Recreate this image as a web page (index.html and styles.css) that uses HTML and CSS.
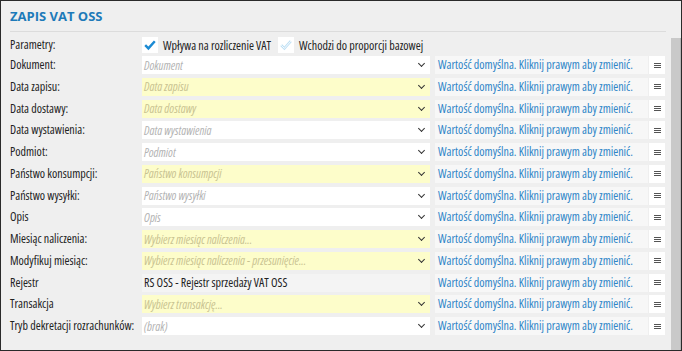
FILE: index.html
```html
<!DOCTYPE html>
<html>
<head>
  <title>Zapis VAT OSS</title>
  <link rel="stylesheet" href="styles.css">
</head>
<body>
  <div class="header">
    <div class="title">ZAPIS VAT OSS</div>
  </div>

  <div class="scroll">
    <div class="content">
      <div class="params">
        <span class="label">Parametry:</span>
        <span class="check">
          <svg width="16" height="16" viewBox="0 0 16 16"><path d="M3.2 8.2 L6.4 11.4 L12.8 4.2" fill="none" stroke="#1b8ad3" stroke-width="2.4" stroke-linejoin="miter"/></svg>
        </span>
        <span class="check-text">Wpływa na rozliczenie VAT</span>
        <span class="check faded">
          <svg width="16" height="16" viewBox="0 0 16 16"><path d="M3.2 8.2 L6.4 11.4 L12.8 4.2" fill="none" stroke="#bddff4" stroke-width="2.6"/><path d="M3.2 8.2 L6.4 11.4 L12.8 4.2" fill="none" stroke="#fff" stroke-width="0.9"/></svg>
        </span>
        <span class="check-text">Wchodzi do proporcji bazowej</span>
      </div>

      <div class="fields">
        <span class="label">Dokument:</span>
        <div class="input"><span class="ph">Dokument</span><i class="chev"></i></div>
        <div class="info">Wartość domyślna. Kliknij prawym aby zmienić.</div>
        <div class="menu"><i></i></div>

        <span class="label">Data zapisu:</span>
        <div class="input req"><span class="ph">Data zapisu</span><i class="chev"></i></div>
        <div class="info">Wartość domyślna. Kliknij prawym aby zmienić.</div>
        <div class="menu"><i></i></div>

        <span class="label">Data dostawy:</span>
        <div class="input req"><span class="ph">Data dostawy</span><i class="chev"></i></div>
        <div class="info">Wartość domyślna. Kliknij prawym aby zmienić.</div>
        <div class="menu"><i></i></div>

        <span class="label">Data wystawienia:</span>
        <div class="input"><span class="ph">Data wystawienia</span><i class="chev"></i></div>
        <div class="info">Wartość domyślna. Kliknij prawym aby zmienić.</div>
        <div class="menu"><i></i></div>

        <span class="label">Podmiot:</span>
        <div class="input"><span class="ph">Podmiot</span><i class="chev"></i></div>
        <div class="info">Wartość domyślna. Kliknij prawym aby zmienić.</div>
        <div class="menu"><i></i></div>

        <span class="label">Państwo konsumpcji:</span>
        <div class="input req"><span class="ph">Państwo konsumpcji</span><i class="chev"></i></div>
        <div class="info">Wartość domyślna. Kliknij prawym aby zmienić.</div>
        <div class="menu"><i></i></div>

        <span class="label">Państwo wysyłki:</span>
        <div class="input"><span class="ph">Państwo wysyłki</span><i class="chev"></i></div>
        <div class="info">Wartość domyślna. Kliknij prawym aby zmienić.</div>
        <div class="menu"><i></i></div>

        <span class="label">Opis</span>
        <div class="input"><span class="ph">Opis</span><i class="chev"></i></div>
        <div class="info">Wartość domyślna. Kliknij prawym aby zmienić.</div>
        <div class="menu"><i></i></div>

        <span class="label">Miesiąc naliczenia:</span>
        <div class="input req"><span class="ph">Wybierz miesiąc naliczenia...</span><i class="chev"></i></div>
        <div class="info">Wartość domyślna. Kliknij prawym aby zmienić.</div>
        <div class="menu"><i></i></div>

        <span class="label">Modyfikuj miesiąc:</span>
        <div class="input req"><span class="ph">Wybierz miesiąc naliczenia - przesunięcie...</span><i class="chev"></i></div>
        <div class="info">Wartość domyślna. Kliknij prawym aby zmienić.</div>
        <div class="menu"><i></i></div>

        <span class="label">Rejestr</span>
        <div class="input readonly"><span class="val">RS OSS - Rejestr sprzedaży VAT OSS</span></div>
        <div class="info">Wartość domyślna. Kliknij prawym aby zmienić.</div>
        <div class="menu"><i></i></div>

        <span class="label">Transakcja</span>
        <div class="input req"><span class="ph">Wybierz transakcję...</span><i class="chev"></i></div>
        <div class="info">Wartość domyślna. Kliknij prawym aby zmienić.</div>
        <div class="menu"><i></i></div>

        <span class="label">Tryb dekretacji rozrachunków:</span>
        <div class="input"><span class="ph">(brak)</span><i class="chev"></i></div>
        <div class="info">Wartość domyślna. Kliknij prawym aby zmienić.</div>
        <div class="menu"><i></i></div>
      </div>
    </div>

    <div class="scrollbar"></div>
  </div>
</body>
</html>
```

FILE: styles.css
```css
html, body {
  margin: 0;
  padding: 0;
}

body {
  width: 682px;
  height: 351px;
  box-sizing: border-box;
  border: 1px solid #2a2a2a;
  background-color: #efefef;
  font-family: "Open Sans", sans-serif;
  font-size: 12px;
  font-stretch: condensed;
  color: #222;
  display: flex;
  flex-direction: column;
  overflow: hidden;
}

.header {
  padding: 7px 15px 0 9px;
}

.title {
  color: #1d7ab9;
  font-size: 13px;
  font-stretch: normal;
  font-weight: bold;
  line-height: 16px;
  padding-bottom: 7px;
  border-bottom: 1px solid #dcdcdc;
}

.scroll {
  display: flex;
  flex: 1;
}

.content {
  flex: none;
  padding-left: 9px;
}

.params {
  display: flex;
  align-items: center;
  height: 18px;
  margin-top: 4px;
  margin-bottom: 2px;
}

.params .label {
  width: 132px;
}

.check {
  width: 16px;
  height: 16px;
  background-color: #fff;
  display: flex;
}

.check-text {
  margin: 0 7px 0 5px;
}

.fields {
  display: grid;
  grid-template-columns: 132px 293px 214px 16px;
  grid-auto-rows: 18px;
  row-gap: 3.75px;
}

.label {
  line-height: 18px;
  white-space: nowrap;
}

.input {
  width: 288px;
  background-color: #fff;
  display: flex;
  align-items: center;
  justify-content: space-between;
  padding: 0 6px 0 2px;
  box-sizing: border-box;
}

.input.req {
  background-color: #fdfdca;
}

.input.readonly {
  background-color: #f4f4f4;
}

.ph {
  color: #b3b3b3;
  font-style: italic;
}

.req .ph {
  color: #c9c391;
}

.val {
  color: #222;
}

.chev {
  width: 4px;
  height: 4px;
  border-right: 1.6px solid #333;
  border-bottom: 1.6px solid #333;
  transform: rotate(45deg);
  margin-top: -3px;
}

.info {
  margin-right: 1px;
  background-color: #f7f7f7;
  color: #2e85c7;
  padding-left: 3px;
  line-height: 18px;
  white-space: nowrap;
  overflow: hidden;
}

.menu {
  background-color: #fff;
  display: flex;
  align-items: center;
  justify-content: center;
}

.menu i {
  width: 7px;
  height: 1px;
  background-color: #555;
  box-shadow: 0 -2px 0 #555, 0 2px 0 #555;
}

.scrollbar {
  width: 9px;
  margin-left: 6px;
  margin-top: 6px;
  background-color: #c9c9c9;
  border-right: 1px solid #b5b5b5;
}
```
